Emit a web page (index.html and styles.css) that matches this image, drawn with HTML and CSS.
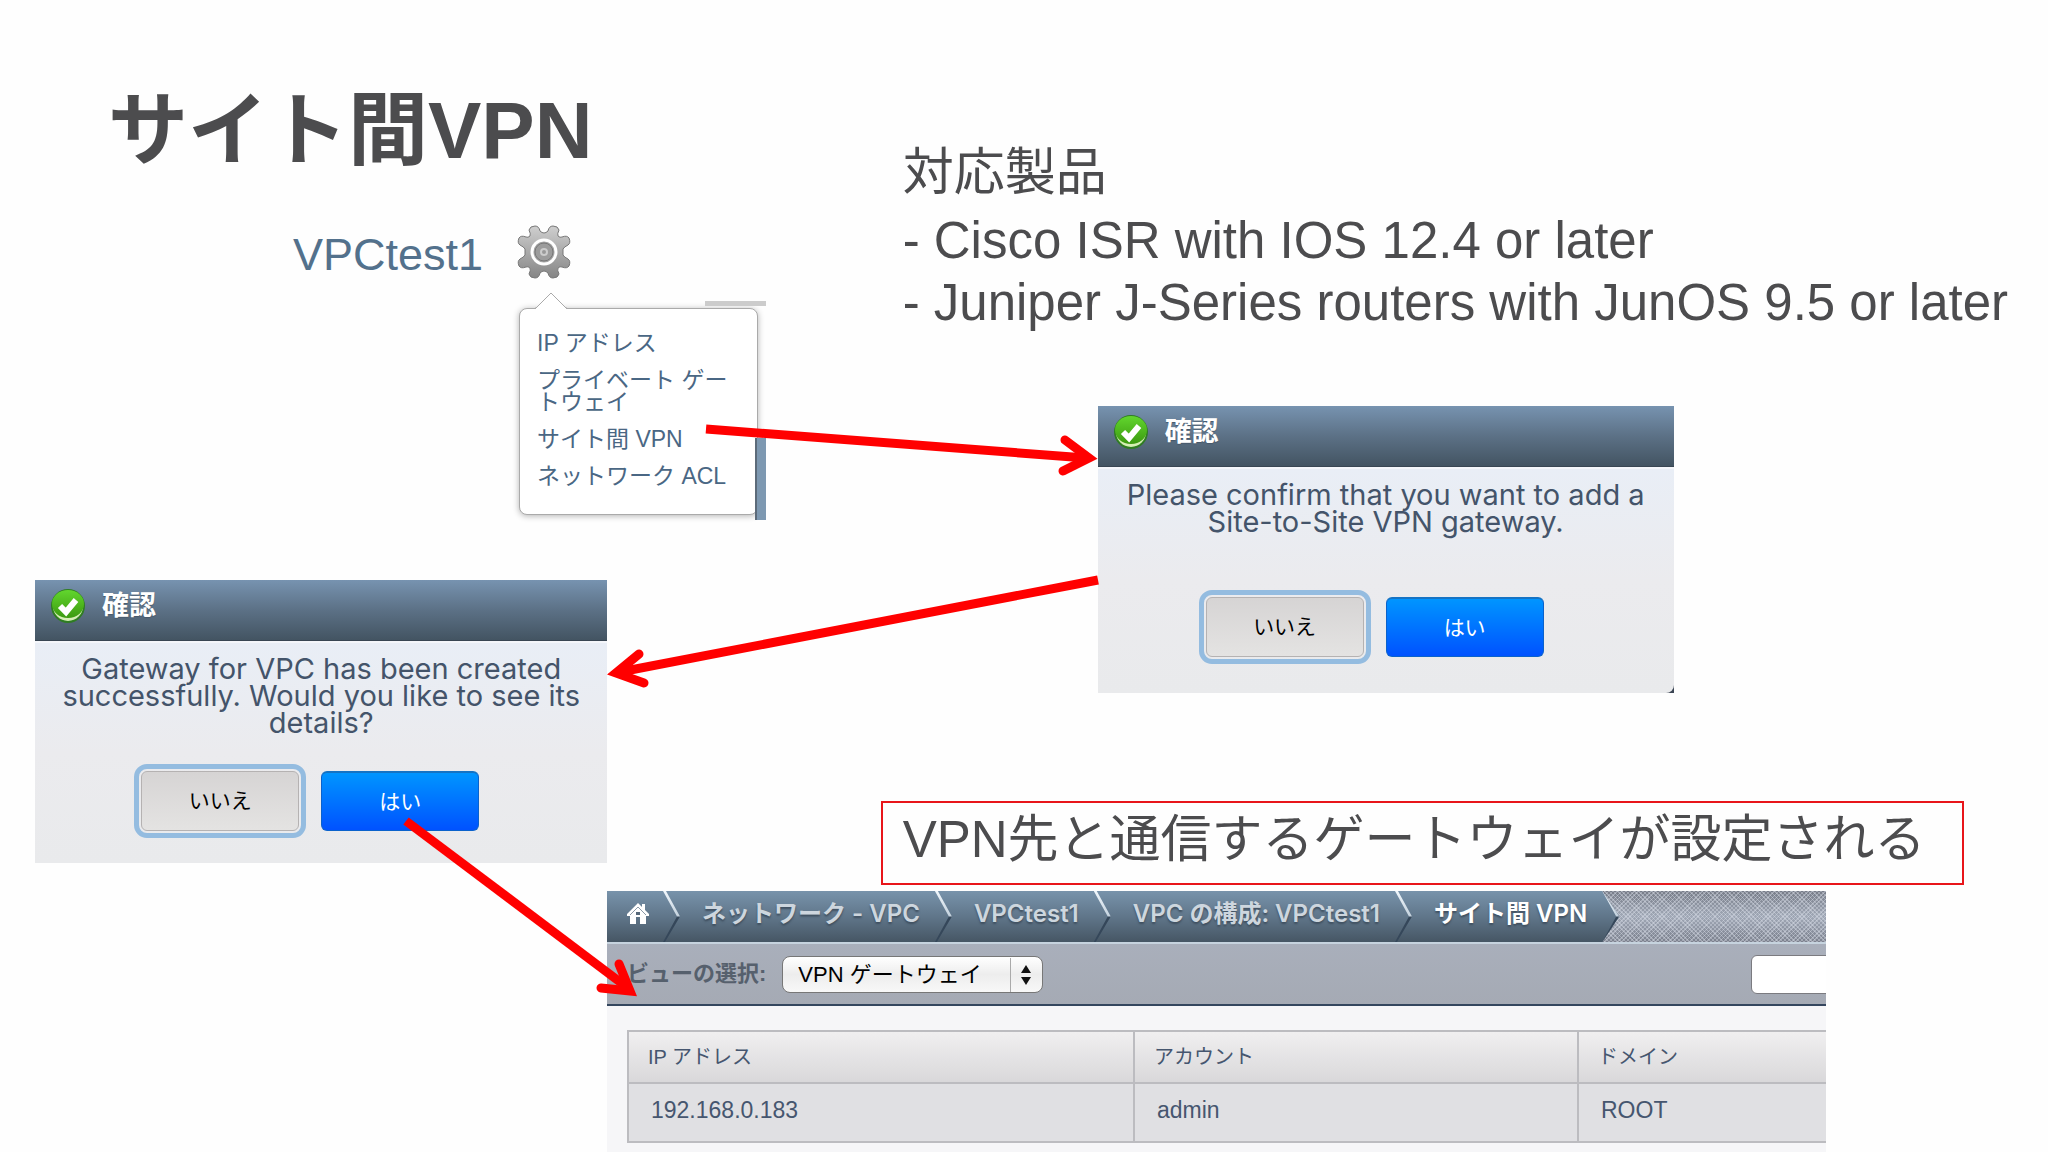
FILE: index.html
```html
<!DOCTYPE html>
<html lang="ja">
<head>
    <meta charset="UTF-8">
    <meta name="viewport" content="width=device-width, initial-scale=1.0">
    <title>サイト間VPN</title>
    <link rel="stylesheet" href="styles.css">
</head>
<body>
    <main class="slide">
        <div class="columns">
            <section class="left">
                <h1 class="title">サイト間VPN</h1>
                <div class="vpc">
                    <span class="vpc-name">VPCtest1</span>
                    <svg class="gear" viewBox="0 0 54 54" aria-hidden="true">
                        <defs>
                            <linearGradient id="metal" x1="0" y1="0" x2="0" y2="1">
                                <stop offset="0" stop-color="#cfcfcf"/>
                                <stop offset="1" stop-color="#858585"/>
                            </linearGradient>
                        </defs>
                        <path d="M12 5 Q13 1 18 1 Q22 1 23 6 Q25 8 27 8 Q29 8 31 6 Q32 1 36 1 Q41 1 42 5 Q40 9 41 11 Q43 13 45 12 Q50 10 52 13 Q54 18 51 20 Q47 22 46 24 L46 30 Q47 32 51 34 Q54 36 52 41 Q50 44 45 42 Q43 41 41 43 Q40 45 42 49 Q41 53 36 53 Q32 53 31 48 Q29 46 27 46 Q25 46 23 48 Q22 53 18 53 Q13 53 12 49 Q14 45 13 43 Q11 41 9 42 Q4 44 2 41 Q0 36 3 34 Q7 32 8 30 L8 24 Q7 22 3 20 Q0 18 2 13 Q4 10 9 12 Q11 13 13 11 Q14 9 12 5 Z" fill="url(#metal)" stroke="#777" stroke-width="1"/>
                        <circle cx="27" cy="27" r="12" fill="#a4a4a4" stroke="#fff" stroke-width="3"/>
                        <circle cx="27" cy="27" r="9" fill="#9c9c9c" stroke="#777"/>
                        <circle cx="27" cy="27" r="3" fill="#999" stroke="#ccc" stroke-width="2"/>
                    </svg>
                </div>
                <nav class="menu">
                    <svg class="menu-caret" viewBox="0 0 32 17" aria-hidden="true">
                        <path d="M1 16 L16 1 L31 16 V17 H1 Z" fill="#fff"/>
                        <path d="M0 16 H1 L16 1 L31 16 H32" fill="none" stroke="#aaa"/>
                    </svg>
                    <ul class="menu-list">
                        <li><a href="#ip">IP アドレス</a></li>
                        <li><a href="#private">プライベート ゲー<br>トウェイ</a></li>
                        <li><a href="#vpn">サイト間 VPN</a></li>
                        <li><a href="#acl">ネットワーク ACL</a></li>
                    </ul>
                </nav>
                <section class="dialog dialog-created">
                    <header class="dialog-head">
                        <svg class="check" viewBox="0 0 36 36" aria-hidden="true">
                            <defs>
                                <linearGradient id="green" x1="0" y1="0" x2="0" y2="1">
                                    <stop offset="0" stop-color="#62d62e"/>
                                    <stop offset="1" stop-color="#3c9a10"/>
                                </linearGradient>
                            </defs>
                            <circle cx="18" cy="18" r="17" fill="#2f7d22"/>
                            <circle cx="18" cy="18" r="15" fill="#d5efb4"/>
                            <ellipse cx="18" cy="16" rx="16" ry="14" fill="url(#green)"/>
                            <path d="M10 18 L16 24 L26 12" fill="none" stroke="#fff" stroke-width="6"/>
                        </svg>
                        <h2>確認</h2>
                    </header>
                    <div class="dialog-body">
                        <p>Gateway for VPC has been created<br>successfully. Would you like to see its<br>details?</p>
                        <div class="buttons">
                            <button type="button" class="btn btn-no">いいえ</button>
                            <button type="button" class="btn btn-yes">はい</button>
                        </div>
                    </div>
                </section>
            </section>

            <section class="right">
                <div class="products">
                    <p class="products-title">対応製品</p>
                    <p>- Cisco ISR with IOS 12.4 or later</p>
                    <p>- Juniper J-Series routers with JunOS 9.5 or later</p>
                </div>
                <section class="dialog dialog-confirm">
                    <header class="dialog-head">
                        <svg class="check" viewBox="0 0 36 36" aria-hidden="true">
                            <circle cx="18" cy="18" r="17" fill="#2f7d22"/>
                            <circle cx="18" cy="18" r="15" fill="#d5efb4"/>
                            <ellipse cx="18" cy="16" rx="16" ry="14" fill="url(#green)"/>
                            <path d="M10 18 L16 24 L26 12" fill="none" stroke="#fff" stroke-width="6"/>
                        </svg>
                        <h2>確認</h2>
                    </header>
                    <div class="dialog-body">
                        <p>Please confirm that you want to add a<br>Site-to-Site VPN gateway.</p>
                        <div class="buttons">
                            <button type="button" class="btn btn-no">いいえ</button>
                            <button type="button" class="btn btn-yes">はい</button>
                        </div>
                    </div>
                </section>
                <p class="callout">VPN先と通信するゲートウェイが設定される</p>
            </section>
        </div>

        <section class="console">
            <nav class="crumb-bar">
                <ol class="crumbs">
                    <li class="crumb crumb-home">
                        <a href="#home" aria-label="ホーム">
                            <svg class="home" viewBox="0 0 22 22" aria-hidden="true">
                                <path d="M11 0 L15 4 V1 H18 V7 L22 11 V13 H19 V21 H13 V14 H9 V21 H3 V13 H0 V11 Z" fill="#fff"/>
                                <path d="M3 12 L11 4 L19 12" fill="none" stroke="#8a98a6"/>
                                <rect x="9" y="9" width="4" height="3" fill="#56687a"/>
                            </svg>
                        </a>
                    </li>
                    <li class="crumb"><a href="#network">ネットワーク - VPC</a></li>
                    <li class="crumb"><a href="#vpctest1">VPCtest1</a></li>
                    <li class="crumb"><a href="#config">VPC の構成: VPCtest1</a></li>
                    <li class="crumb crumb-current"><a href="#site">サイト間 VPN</a></li>
                </ol>
            </nav>
            <div class="toolbar">
                <label for="view">ビューの選択:</label>
                <div class="select">
                    <select id="view">
                        <option>VPN ゲートウェイ</option>
                    </select>
                    <svg class="select-arrows" viewBox="0 0 32 34" aria-hidden="true">
                        <path d="M0 0 V34" stroke="#aaa" stroke-width="2"/>
                        <path d="M11 15 L16 7 L21 15 Z M11 19 L16 27 L21 19 Z" fill="#111"/>
                    </svg>
                </div>
                <input class="search" type="text" aria-label="検索">
            </div>
            <div class="content">
                <table class="grid">
                    <thead>
                        <tr><th>IP アドレス</th><th>アカウント</th><th>ドメイン</th></tr>
                    </thead>
                    <tbody>
                        <tr><td>192.168.0.183</td><td>admin</td><td>ROOT</td></tr>
                    </tbody>
                </table>
            </div>
        </section>

        <!-- flow arrows drawn over the panels -->
        <svg class="arrows" viewBox="0 0 2048 1152" aria-hidden="true">
            <path d="M706 429 L1086 458"/>
            <path class="head" d="M1065 440 L1089 458 L1063 471"/>
            <path d="M1098 580 L620 672"/>
            <path class="head" d="M639 654 L616 673 L644 683"/>
            <path d="M406 821 L628 988"/>
            <path class="head" d="M619 964 L630 991 L601 988"/>
        </svg>
    </main>
</body>
</html>
```
FILE: styles.css
```css
* {
    margin: 0;
    padding: 0;
    box-sizing: border-box;
}

body {
    background: #fefefe;
    color: #4c4c4e;
    font-family: "Liberation Sans", "Noto Sans CJK JP", sans-serif;
}

a {
    color: inherit;
    text-decoration: none;
}

.slide {
    position: relative;
    min-height: 100vh;
    overflow: hidden;
}

.columns {
    display: grid;
    grid-template-columns: 43% 1fr;
}

/* Left column */
.left {
    padding-top: 83px;
}

.title {
    padding-left: 108px;
    font-size: 80px;
    line-height: 96px;
}

.vpc {
    display: flex;
    gap: 34px;
    margin-top: 46px;
    padding-left: 293px;
}

.vpc-name {
    color: #53718c;
    font-size: 45px;
    line-height: 60px;
}

.gear {
    width: 54px;
    height: 54px;
}

.menu {
    position: relative;
    width: 239px;
    margin: 23px 0 0 519px;
}

.menu::before {
    content: "";
    position: absolute;
    top: -7px;
    right: -8px;
    width: 61px;
    height: 5px;
    background: #ccc;
}

.menu::after {
    content: "";
    position: absolute;
    right: -8px;
    bottom: -5px;
    width: 9px;
    height: 82px;
    background: #7d98b1;
    border-left: 2px solid #5c6b7a;
}

.menu-caret {
    position: absolute;
    top: -16px;
    left: 16px;
    width: 32px;
    height: 17px;
    z-index: 1;
}

.menu-list {
    display: flex;
    flex-direction: column;
    gap: 15px;
    padding: 23px 17px 27px;
    background: #fff;
    border: 1px solid #aaa;
    border-radius: 8px;
    box-shadow: 0 1px 6px rgba(0, 0, 0, 0.3);
    list-style: none;
    color: #4a6784;
    font-size: 23px;
    line-height: 22px;
    white-space: nowrap;
}

/* Dialogs */
.dialog {
    background: #3c4654;
    color: #44546a;
}

.dialog-created {
    width: 65%;
    margin: 65px 0 0 35px;
}

.dialog-confirm {
    width: 576px;
    margin: 72px 0 0 217px;
}

.dialog-head {
    display: flex;
    gap: 16px;
    height: 61px;
    padding: 8px 15px;
    background: linear-gradient(#7793b0, #5c7186 50%, #435462);
    border-bottom: 1px solid #394653;
    color: #fff;
}

.dialog-head h2 {
    font-size: 27px;
    line-height: 37px;
    text-shadow: 0 1px 1px #46586a;
}

.check {
    width: 36px;
    height: 36px;
}

.dialog-body {
    padding: 12px 0 32px;
    background: linear-gradient(#e9eef6, #ebebee 50%, #e9eaec);
    border-top: 2px solid #f4f6fa;
    text-align: center;
}

.dialog-confirm .dialog-body {
    padding-bottom: 36px;
    border-bottom-right-radius: 8px;
}

.dialog-body p {
    min-height: 81px;
    font-family: Inter, "Liberation Sans", sans-serif;
    font-size: 29px;
    line-height: 27px;
    white-space: nowrap;
}

.buttons {
    display: flex;
    justify-content: center;
    gap: 22px;
    margin-top: 35px;
    padding-right: 22px;
}

.btn {
    width: 158px;
    height: 60px;
    border-radius: 6px;
    font-family: inherit;
    font-size: 21px;
    line-height: 28px;
}

.btn-no {
    background: linear-gradient(#d6d4d4, #e4e3e2);
    border: 1px solid #b5b2b2;
    outline: 5px solid #94bce0;
    outline-offset: 2px;
    color: #000;
}

.btn-yes {
    background: linear-gradient(#0095ff, #0052ff);
    border: 1px solid #0a62cc;
    border-top: 2px solid #1573c4;
    color: #fff;
}

/* Right column */
.right {
    padding-top: 142px;
}

.products {
    padding-left: 22px;
    font-size: 51px;
    line-height: 62px;
    white-space: nowrap;
}

.products-title {
    margin-bottom: 6px;
}

.callout {
    margin: 108px 84px 0 0;
    padding: 6px 20px 12px;
    border: 2px solid #e8151a;
    font-size: 51px;
    line-height: 62px;
    white-space: nowrap;
}

/* Console */
.console {
    margin: 6px 222px 0 607px;
    overflow: hidden;
    font-size: 22px;
}

.crumb-bar {
    display: flex;
    background: repeating-linear-gradient(45deg, rgba(220, 225, 235, 0.4) 0 1px, transparent 1px 3px),
        repeating-linear-gradient(-45deg, rgba(220, 225, 235, 0.4) 0 1px, transparent 1px 3px),
        linear-gradient(#777c88, #a0a8b6 50%, #7c818e);
}

.crumbs {
    display: flex;
    background: linear-gradient(#7893ab, #60768a 50%, #465664);
    clip-path: polygon(0 0, calc(100% - 17px) 0, 100% 50%, calc(100% - 17px) 100%, 0 100%);
    list-style: none;
}

.crumb {
    position: relative;
    height: 51px;
    padding: 0 32px 0 22px;
    color: #cdd6de;
    font-family: Inter, "Noto Sans CJK JP", sans-serif;
    font-size: 24px;
    font-weight: 600;
    line-height: 46px;
    white-space: nowrap;
    text-shadow: 0 2px 2px #3f4f5f;
}

/* chevron at the end of each crumb */
.crumb::after {
    content: "";
    position: absolute;
    top: 0;
    right: 0;
    width: 17px;
    height: 51px;
    background: linear-gradient(#f0f6fb, #c5d3df 48%, #35475a 52%, #35475a);
    clip-path: polygon(0 0, 3px 0, 100% 50%, 2px 100%, 0 100%, 14px 50%);
}

.crumb-home {
    padding: 12px 31px 0 20px;
}

.home {
    display: block;
    width: 22px;
    height: 22px;
}

.crumb-current {
    color: #fff;
}

.toolbar {
    display: flex;
    align-items: center;
    height: 64px;
    padding-left: 20px;
    background: linear-gradient(#a9afbb, #a5aab4);
    border-top: 2px solid #c6d3de;
    border-bottom: 2px solid #34465e;
}

.toolbar label {
    color: #56606d;
    font-size: 22px;
    font-weight: bold;
    line-height: 36px;
}

.select {
    position: relative;
    margin-left: 16px;
}

.select select {
    width: 261px;
    height: 37px;
    padding-left: 15px;
    appearance: none;
    background: linear-gradient(#fff, #ededed 50%, #f8f8f8);
    border: 1px solid #777;
    border-radius: 8px;
    color: #000;
    font-family: inherit;
    font-size: 22px;
}

.select-arrows {
    position: absolute;
    top: 2px;
    right: 1px;
    width: 32px;
    height: 34px;
    pointer-events: none;
}

/* runs past the right edge of the console */
.search {
    width: 260px;
    height: 39px;
    margin: 0 -185px 0 auto;
    flex-shrink: 0;
    background: #fff;
    border: 1px solid #7b7b80;
    border-radius: 6px;
}

.content {
    padding: 24px 0 10px 20px;
    background: #f6f6f8;
}

.grid {
    width: 100%;
    border-collapse: collapse;
    table-layout: fixed;
    color: #46566f;
}

.grid th,
.grid td {
    border: 2px solid #bcbcc0;
    border-right: 0;
    padding: 0 0 4px 22px;
    text-align: left;
}

.grid th {
    height: 52px;
    padding-left: 19px;
    background: linear-gradient(#f0eff0, #d9d8da);
    font-size: 20px;
    font-weight: normal;
}

.grid td {
    height: 59px;
    background: #e0e0e3;
    font-size: 23px;
}

.grid th:nth-child(1) {
    width: 506px;
}

.grid th:nth-child(2) {
    width: 444px;
}

/* Arrows */
.arrows {
    position: absolute;
    top: 0;
    left: 0;
    width: 100%;
    fill: none;
    stroke: #f00;
    stroke-width: 9;
    pointer-events: none;
}

.arrows .head {
    stroke-linecap: round;
}
```
